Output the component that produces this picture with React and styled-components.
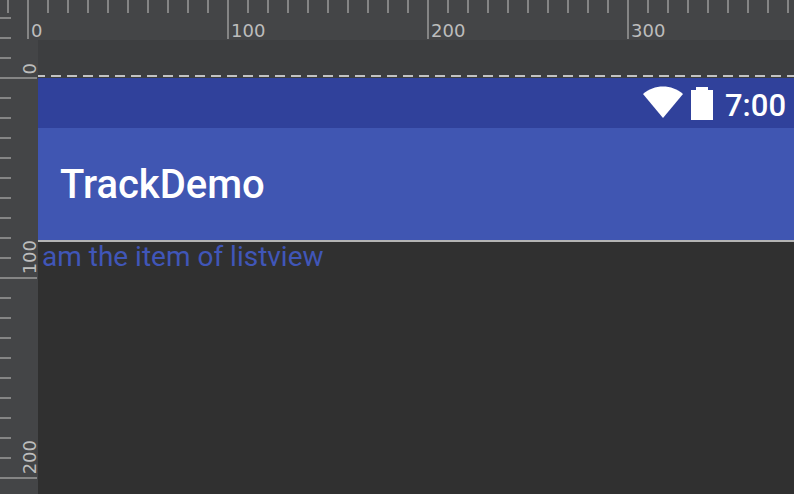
import React from "react";
import styled, { createGlobalStyle } from "styled-components";

const GlobalStyle = createGlobalStyle`
  *, *::before, *::after { box-sizing: border-box; }
  body { margin: 0; background: #303030; overflow: hidden; }
`;

const tick = "#858585";

const Editor = styled.div`
  display: grid;
  grid-template-columns: 38px minmax(0, 1fr);
  grid-template-rows: 40px minmax(0, 1fr);
  height: 100vh;
  overflow: hidden;
  background: #444547;
`;

const TopRuler = styled.div`
  grid-area: 1 / 1 / 2 / 3;
  display: flex;
  min-width: 0;
`;

const TopLead = styled.div`
  flex: 0 0 27px;
  height: 13px;
  background: repeating-linear-gradient(to left, transparent 0 18px, ${tick} 18px 20px);
`;

const TopSegment = styled.div`
  flex: 0 0 200px;
  height: 39px;
  padding: 20px 0 0 2px;
  border-left: 2px solid ${tick};
  background: repeating-linear-gradient(to right, transparent 0 18px, ${tick} 18px 20px) 0 0 / 196px 13px no-repeat;
`;

const SideRuler = styled.div`
  grid-area: 1 / 1 / 3 / 2;
  display: flex;
  flex-direction: column;
  min-height: 0;
`;

const SideSegment = styled.div`
  flex: 0 0 ${(p) => (p.$first ? "79px" : "200px")};
  width: 37px;
  display: flex;
  justify-content: flex-end;
  align-items: flex-end;
  padding-bottom: 3px;
  border-bottom: 2px solid ${tick};
  background: repeating-linear-gradient(to top, transparent 0 18px, ${tick} 18px 20px) 0 100% / 11px ${(p) => (p.$first ? "77px" : "196px")} no-repeat;
`;

const Mark = styled.span`
  display: block;
  font: 18px/${(p) => (p.$side ? "14px" : "22px")} "DejaVu Sans", sans-serif;
  color: #bdbdbd;
  ${(p) => p.$side && "writing-mode: vertical-rl; transform: rotate(180deg);"}
`;

const Canvas = styled.main`
  grid-area: 2 / 2 / 3 / 3;
  display: flex;
  flex-direction: column;
  overflow: hidden;
  padding-top: 35px;
  background: #3d3e40;
`;

const DashedEdge = styled.div`
  flex: none;
  height: 3px;
  background: repeating-linear-gradient(to right, #c3c3c3 0 10px, transparent 10px 16px) -3px 0 / calc(100% + 3px) 2px no-repeat;
`;

const StatusBar = styled.div`
  flex: none;
  display: flex;
  justify-content: flex-end;
  align-items: center;
  height: 50px;
  padding-right: 8px;
  background: #30419b;
  color: #fff;
`;

const StatusIcon = styled.svg`
  display: block;
  margin: 0 8px 0 0;
  fill: currentColor;
`;

const Clock = styled.time`
  padding: 6px 0 0 4px;
  font: 500 31px/38px Roboto, sans-serif;
`;

const AppBar = styled.header`
  flex: none;
  display: flex;
  align-items: center;
  height: 114px;
  padding: 2px 0 0 22px;
  border-bottom: 2px solid #b4b4b4;
  background: #4056b2;
`;

const Title = styled.h1`
  margin: 0;
  font: 500 40px/48px Roboto, sans-serif;
  color: #fff;
`;

const List = styled.ul`
  flex: 1;
  margin: 0;
  padding: 0 4px;
  list-style: none;
  background: #303030;
`;

const Item = styled.li`
  font: 28px/30px Roboto, sans-serif;
  color: #4056b8;
`;

export default function App() {
  return (
    <>
      <GlobalStyle />
      <Editor>
        <TopRuler>
          <TopLead />
          {[0, 100, 200, 300].map((n) => (
            <TopSegment key={n}>
              <Mark>{n}</Mark>
            </TopSegment>
          ))}
        </TopRuler>
        <SideRuler>
          {[0, 100, 200].map((n) => (
            <SideSegment key={n} $first={n === 0}>
              <Mark $side>{n}</Mark>
            </SideSegment>
          ))}
        </SideRuler>
        <Canvas>
          <DashedEdge />
          <StatusBar>
            <StatusIcon width="40" height="34" viewBox="0 0 40 34" aria-label="Wi-Fi">
              <path d="M0 8C11-2 29-2 40 8L20 32Z" />
            </StatusIcon>
            <StatusIcon width="22" height="34" viewBox="0 0 22 34" aria-label="Battery">
              <path d="M0 4H5V1H17V4H22V34H0Z" />
            </StatusIcon>
            <Clock>7:00</Clock>
          </StatusBar>
          <AppBar>
            <Title>TrackDemo</Title>
          </AppBar>
          <List>
            <Item>am the item of listview</Item>
          </List>
        </Canvas>
      </Editor>
    </>
  );
}
